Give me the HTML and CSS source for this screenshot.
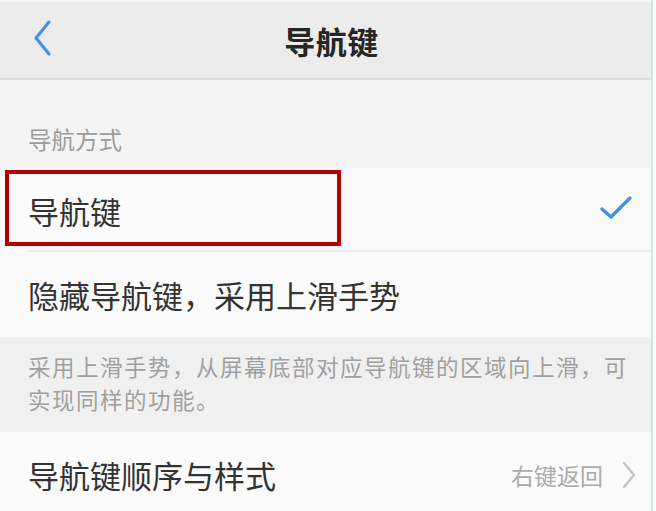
FILE: index.html
```html
<!DOCTYPE html>
<html lang="zh-CN">
<head>
<meta charset="utf-8">
<link rel="stylesheet" href="styles.css">
</head>
<body>
<div class="screen">
  <header class="topbar">
    <svg class="back" width="22" height="38" viewBox="0 0 22 38"><path d="M17 3 L4 19 L17 35" fill="none" stroke="#3f90e6" stroke-width="3" stroke-linecap="round" stroke-linejoin="round"/></svg>
    <h1 class="title">导航键</h1>
  </header>
  <div class="section-label">导航方式</div>
  <div class="row row-selected">
    <span class="row-text">导航键</span>
    <svg class="check" width="34" height="28" viewBox="0 0 34 28"><path d="M3 15 L12 23 L31 4" fill="none" stroke="#3f90e6" stroke-width="3.4" stroke-linecap="round" stroke-linejoin="round"/></svg>
    <div class="highlight"></div>
  </div>
  <div class="divider"></div>
  <div class="row row-second">
    <span class="row-text">隐藏导航键，采用上滑手势</span>
  </div>
  <div class="note">采用上滑手势，从屏幕底部对应导航键的区域向上滑，可<br>实现同样的功能。</div>
  <div class="row row-last">
    <span class="row-text">导航键顺序与样式</span>
    <span class="row-value">右键返回</span>
    <svg class="chev" width="16" height="30" viewBox="0 0 16 30"><path d="M3 3 L13 15 L3 27" fill="none" stroke="#c4c4c4" stroke-width="2.4" stroke-linecap="round" stroke-linejoin="round"/></svg>
  </div>
</div>
</body>
</html>
```
FILE: styles.css
```css
html, body {
  margin: 0;
  padding: 0;
}
body {
  width: 656px;
  height: 511px;
  overflow: hidden;
  font-family: "Noto Sans CJK SC", "Noto Sans", sans-serif;
  background: #fdfdfd;
}
.screen {
  width: 651px;
  height: 511px;
  border-right: 2px solid #cfe9d6;
  display: flex;
  flex-direction: column;
  background: #fafafa;
}
.topbar {
  height: 76px;
  flex: none;
  background: #ececec;
  border-top: 2px solid #f5f5f5;
  border-bottom: 2px solid #dcdcdc;
  display: flex;
  align-items: center;
  justify-content: center;
  position: relative;
}
.back {
  position: absolute;
  left: 32px;
  top: 17px;
}
.title {
  margin: 0 0 0 12px;
  font-size: 31px;
  font-weight: 700;
  color: #262626;
  letter-spacing: 0.5px;
}
.section-label {
  flex: none;
  background: #f4f4f4;
  height: 88px;
  box-sizing: border-box;
  padding: 44px 0 0 28px;
  font-size: 23.5px;
  line-height: 30px;
  color: #9c9c9c;
}
.row {
  flex: none;
  background: #fafafa;
  display: flex;
  align-items: center;
  box-sizing: border-box;
  padding: 0 18px 0 28px;
  position: relative;
}
.row-selected {
  height: 82px;
  padding-top: 3px;
}
.row-second {
  height: 85px;
  padding-top: 1px;
}
.row-text {
  font-size: 31px;
  line-height: 44px;
  color: #333;
  flex: 1;
}
.check {
  margin-right: 0;
  margin-top: -6px;
}
.highlight {
  position: absolute;
  left: 5px;
  top: 2px;
  width: 336px;
  height: 76px;
  box-sizing: border-box;
  border: 4px solid #b10000;
}
.divider {
  flex: none;
  height: 2px;
  background: #ececec;
  margin-left: 28px;
}
.note {
  flex: none;
  background: #f0f0f0;
  height: 95px;
  box-sizing: border-box;
  padding: 13px 0 0 28px;
  font-size: 22.5px;
  letter-spacing: 1.5px;
  line-height: 33px;
  color: #a0a0a0;
  white-space: nowrap;
  overflow: hidden;
}
.row-last {
  height: 79px;
  padding-top: 6px;
  padding-right: 14px;
}
.row-value {
  font-size: 23px;
  color: #ababab;
  margin-right: 18px;
}
```
